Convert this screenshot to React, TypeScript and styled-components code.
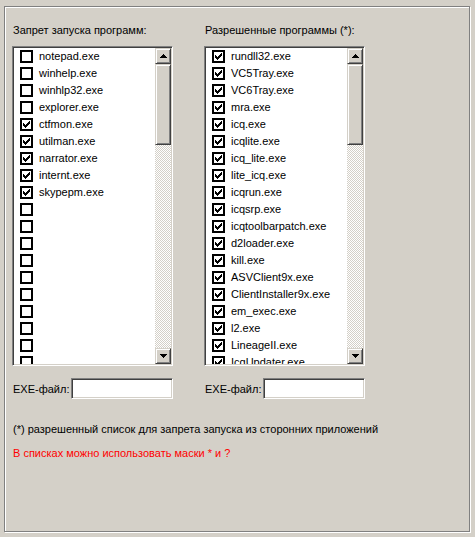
import React from "react";
import styled, { createGlobalStyle } from "styled-components";

const GlobalStyle = createGlobalStyle`
  html, body {
    margin: 0;
    padding: 0;
    background: #d4d0c8;
  }
  body {
    font-family: "Liberation Sans", Arial, sans-serif;
    font-size: 11px;
    color: #000;
  }
`;

const Page = styled.div`
  width: 475px;
  height: 537px;
  box-sizing: border-box;
  padding: 6px 0 0 4px;
  background: #d4d0c8;
  overflow: hidden;
`;

const Frame = styled.div`
  width: 466px;
  height: 526px;
  box-sizing: border-box;
  border: 1px solid #808080;
  box-shadow: inset 1px 1px 0 #fff, 1px 1px 0 #fff;
  padding: 17px 0 0 7px;
`;

const Columns = styled.div`
  display: flex;
  gap: 31px;
`;

const Column = styled.div`
  display: flex;
  flex-direction: column;
  width: 161px;
`;

const Title = styled.div`
  height: 13px;
  line-height: 13px;
  padding-left: 1px;
  margin-bottom: 9px;
  white-space: nowrap;
`;

const ListBox = styled.div`
  display: flex;
  width: 161px;
  height: 320px;
  box-sizing: border-box;
  border-style: solid;
  border-width: 1px;
  border-color: #808080 #fff #fff #808080;
  box-shadow: inset 1px 1px 0 #404040, inset -1px -1px 0 #d4d0c8;
  padding: 1px;
  background: #fff;
`;

const ListBody = styled.div`
  flex: 1;
  overflow: hidden;
  background: #fff;
`;

const Row = styled.div`
  display: flex;
  align-items: flex-start;
  height: 17px;
  padding-left: 6px;
`;

const Box = styled.div`
  width: 13px;
  height: 13px;
  box-sizing: border-box;
  border: 2px solid #000;
  background: #fff;
  margin-top: 2px;
  display: flex;
  align-items: center;
  justify-content: center;
  flex-shrink: 0;
`;

const ItemText = styled.span`
  margin-left: 6px;
  line-height: 17px;
  white-space: nowrap;
`;

const ScrollBar = styled.div`
  display: flex;
  flex-direction: column;
  width: 16px;
  flex-shrink: 0;
`;

const raised = `
  box-sizing: border-box;
  background: #d4d0c8;
  border-style: solid;
  border-width: 1px;
  border-color: #d4d0c8 #404040 #404040 #d4d0c8;
  box-shadow: inset 1px 1px 0 #fff, inset -1px -1px 0 #808080;
`;

const ScrollButton = styled.div`
  ${raised}
  width: 16px;
  height: 16px;
  display: flex;
  align-items: center;
  justify-content: center;
  flex-shrink: 0;
`;

const Thumb = styled.div<{ $h: number }>`
  ${raised}
  width: 16px;
  height: ${(p) => p.$h}px;
  flex-shrink: 0;
`;

const Track = styled.div`
  flex: 1;
  background: conic-gradient(#fff 25%, #d4d0c8 0 50%, #fff 0 75%, #d4d0c8 0) 0 0 / 2px 2px;
`;

const FieldRow = styled.div`
  display: flex;
  align-items: center;
  margin-top: 12px;
`;

const FieldLabel = styled.span`
  width: 58px;
  padding-left: 1px;
  white-space: nowrap;
`;

const TextInput = styled.div`
  width: 102px;
  height: 21px;
  box-sizing: border-box;
  border-style: solid;
  border-width: 1px;
  border-color: #808080 #fff #fff #808080;
  box-shadow: inset 1px 1px 0 #404040, inset -1px -1px 0 #d4d0c8;
  background: #fff;
`;

const Note = styled.div<{ $red?: boolean }>`
  line-height: 13px;
  padding-left: 1px;
  color: ${(p) => (p.$red ? "#ff0000" : "#000")};
  margin-top: ${(p) => (p.$red ? 11 : 24)}px;
  white-space: nowrap;
`;

const Check = () => (
  <svg width="7" height="7" viewBox="0 0 7 7" shapeRendering="crispEdges">
    <path
      fill="#000"
      d="M6 0h1v1h-1z M5 1h2v1h-2z M0 2h1v1h-1z M4 2h3v1h-3z M0 3h2v1h-2z M3 3h3v1h-3z M0 4h5v1h-5z M1 5h3v1h-3z M2 6h1v1h-1z"
    />
  </svg>
);

const Arrow = ({ up }: { up?: boolean }) => (
  <svg width="7" height="4" viewBox="0 0 7 4" shapeRendering="crispEdges">
    <path
      fill="#000"
      d={
        up
          ? "M3 0h1v1h-1z M2 1h3v1h-3z M1 2h5v1h-5z M0 3h7v1h-7z"
          : "M0 0h7v1h-7z M1 1h5v1h-5z M2 2h3v1h-3z M3 3h1v1h-1z"
      }
    />
  </svg>
);

type Item = { name: string; checked: boolean };

const List = ({ items }: { items: Item[] }) => (
  <ListBox>
    <ListBody>
      {items.map((it, i) => (
        <Row key={i}>
          <Box>{it.checked && <Check />}</Box>
          {it.name && <ItemText>{it.name}</ItemText>}
        </Row>
      ))}
    </ListBody>
    <ScrollBar>
      <ScrollButton>
        <Arrow up />
      </ScrollButton>
      <Thumb $h={81} />
      <Track />
      <ScrollButton>
        <Arrow />
      </ScrollButton>
    </ScrollBar>
  </ListBox>
);

const leftItems: Item[] = [
  { name: "notepad.exe", checked: false },
  { name: "winhelp.exe", checked: false },
  { name: "winhlp32.exe", checked: false },
  { name: "explorer.exe", checked: false },
  { name: "ctfmon.exe", checked: true },
  { name: "utilman.exe", checked: true },
  { name: "narrator.exe", checked: true },
  { name: "internt.exe", checked: true },
  { name: "skypepm.exe", checked: true },
  ...Array.from({ length: 10 }, () => ({ name: "", checked: false })),
];

const rightItems: Item[] = [
  "rundll32.exe",
  "VC5Tray.exe",
  "VC6Tray.exe",
  "mra.exe",
  "icq.exe",
  "icqlite.exe",
  "icq_lite.exe",
  "lite_icq.exe",
  "icqrun.exe",
  "icqsrp.exe",
  "icqtoolbarpatch.exe",
  "d2loader.exe",
  "kill.exe",
  "ASVClient9x.exe",
  "ClientInstaller9x.exe",
  "em_exec.exe",
  "l2.exe",
  "LineageII.exe",
  "IcqUpdater.exe",
].map((name) => ({ name, checked: true }));

export default function App() {
  return (
    <>
      <GlobalStyle />
      <Page>
        <Frame>
          <Columns>
            <Column>
              <Title>Запрет запуска программ:</Title>
              <List items={leftItems} />
              <FieldRow>
                <FieldLabel>EXE-файл:</FieldLabel>
                <TextInput />
              </FieldRow>
            </Column>
            <Column>
              <Title>Разрешенные программы (*):</Title>
              <List items={rightItems} />
              <FieldRow>
                <FieldLabel>EXE-файл:</FieldLabel>
                <TextInput />
              </FieldRow>
            </Column>
          </Columns>
          <Note>(*) разрешенный список для запрета запуска из сторонних приложений</Note>
          <Note $red>В списках можно использовать маски * и ?</Note>
        </Frame>
      </Page>
    </>
  );
}
